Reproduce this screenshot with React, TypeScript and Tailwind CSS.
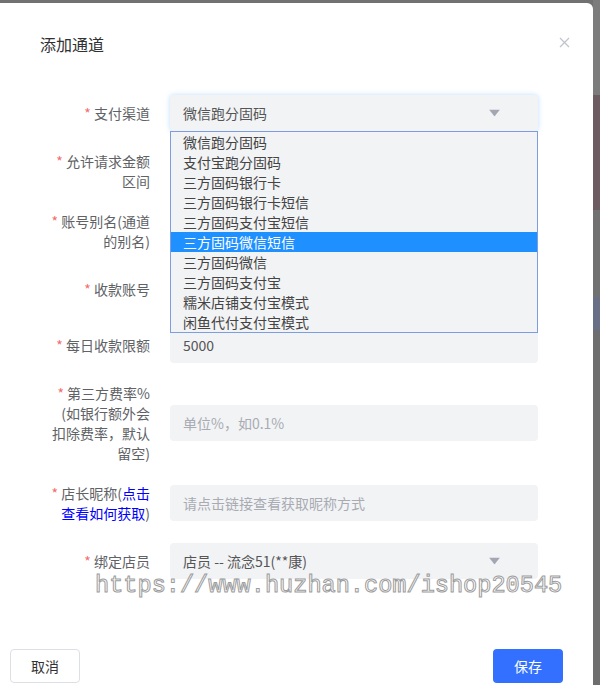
const channels = [
  '微信跑分固码',
  '支付宝跑分固码',
  '三方固码银行卡',
  '三方固码银行卡短信',
  '三方固码支付宝短信',
  '三方固码微信短信',
  '三方固码微信',
  '三方固码支付宝',
  '糯米店铺支付宝模式',
  '闲鱼代付支付宝模式',
];

function Label({ children }: { children: React.ReactNode }) {
  return (
    <div className="w-[100px] shrink-0 text-right text-[14px] leading-5 text-[#606266]">
      <span className="text-[#f56c6c]">*</span> {children}
    </div>
  );
}

function Caret() {
  return (
    <svg width="11" height="7" viewBox="0 0 11 7" className="absolute right-[38px] top-1/2 -translate-y-1/2">
      <path d="M0 0h11L5.5 7z" fill="#a3a6b4" />
    </svg>
  );
}

function Field({ value, placeholder }: { value?: string; placeholder?: string }) {
  return (
    <div className="flex h-9 w-[368px] items-center rounded bg-[#f2f3f5] px-[13px] text-[14px]">
      {value ? <span className="text-[#555]">{value}</span> : <span className="text-[#a8abb2]">{placeholder}</span>}
    </div>
  );
}

function Row({ label, children }: { label: React.ReactNode; children: React.ReactNode }) {
  return (
    <div className="flex items-center gap-5">
      <Label>{label}</Label>
      {children}
    </div>
  );
}

export default function App() {
  const active = 5;

  return (
    <div className="relative h-[685px] w-[600px] overflow-hidden bg-[#717171] font-['Noto_Sans_CJK_SC','Noto_Sans',sans-serif]">
      {/* page behind the overlay, peeking out on the right */}
      <div className="absolute right-0 top-0 flex h-full w-[7px] flex-col">
        <div className="h-[95px] bg-[#7c7c7c]" />
        <div className="h-[115px] bg-[#6d5c62]" />
        <div className="h-[87px] bg-[#717171]" />
        <div className="h-[33px] bg-[#6a6f88]" />
        <div className="flex-1 bg-[#6e6e6e]" />
      </div>

      <div className="absolute left-0 top-[3px] flex h-[682px] w-[593px] flex-col rounded-tr-md bg-white">
        <div className="flex items-center justify-between pl-10 pr-[23px] pt-[29px]">
          <h2 className="text-[16px] leading-6 text-[#303133]">添加通道</h2>
          <svg width="11" height="11" viewBox="0 0 11 11" className="mt-[-3px]">
            <path d="M1 1l9 9M10 1l-9 9" stroke="#c0c4cc" strokeWidth="1.3" />
          </svg>
        </div>

        <div className="relative ml-[50px] mt-[39px] flex flex-col gap-5">
          <Row label="支付渠道">
            <div className="relative">
              <div className="flex h-9 w-[368px] items-center rounded bg-[#f2f3f5] px-[13px] text-[14px] text-[#555] shadow-[0_0_5px_rgba(64,158,255,0.35)]">
                微信跑分固码
              </div>
              <Caret />
            </div>
          </Row>
          <Row label="允许请求金额区间">
            <Field />
          </Row>
          <Row label="账号别名(通道的别名)">
            <Field />
          </Row>
          <Row label="收款账号">
            <Field />
          </Row>
          <Row label="每日收款限额">
            <Field value="5000" />
          </Row>
          <Row label="第三方费率%(如银行额外会扣除费率，默认留空)">
            <Field placeholder="单位%，如0.1%" />
          </Row>
          <Row
            label={
              <>
                店长昵称(<span className="text-[#0000ff]">点击查看如何获取</span>)
              </>
            }
          >
            <Field placeholder="请点击链接查看获取昵称方式" />
          </Row>
          <Row label="绑定店员">
            <div className="relative">
              <Field value="店员 -- 流念51(**康)" />
              <Caret />
            </div>
          </Row>

          {/* open channel list */}
          <ul className="absolute left-[120px] top-[36px] w-[368px] border border-[#7d9de0] bg-[#f2f3f5] text-[14px] leading-5 text-[#444]">
            {channels.map((c, i) => (
              <li key={c} className={i === active ? 'bg-[#1e90ff] pl-3 text-white' : 'pl-3'}>
                {c}
              </li>
            ))}
          </ul>
        </div>

        <div className="mt-auto flex justify-between pb-[2px] pl-[10px] pr-[30px]">
          <button className="h-[34px] w-[70px] rounded border border-[#dcdfe6] bg-white text-[14px] text-[#333]">取消</button>
          <button className="h-[34px] w-[70px] rounded bg-[#3370ff] text-[14px] text-white">保存</button>
        </div>
      </div>

      <div className="pointer-events-none absolute left-[95px] top-[570px] font-['Liberation_Mono',monospace] text-[23.6px] leading-8 text-white/70 [-webkit-text-stroke:1px_#9c9c9c]">
        https://www.huzhan.com/ishop20545
      </div>
    </div>
  );
}
